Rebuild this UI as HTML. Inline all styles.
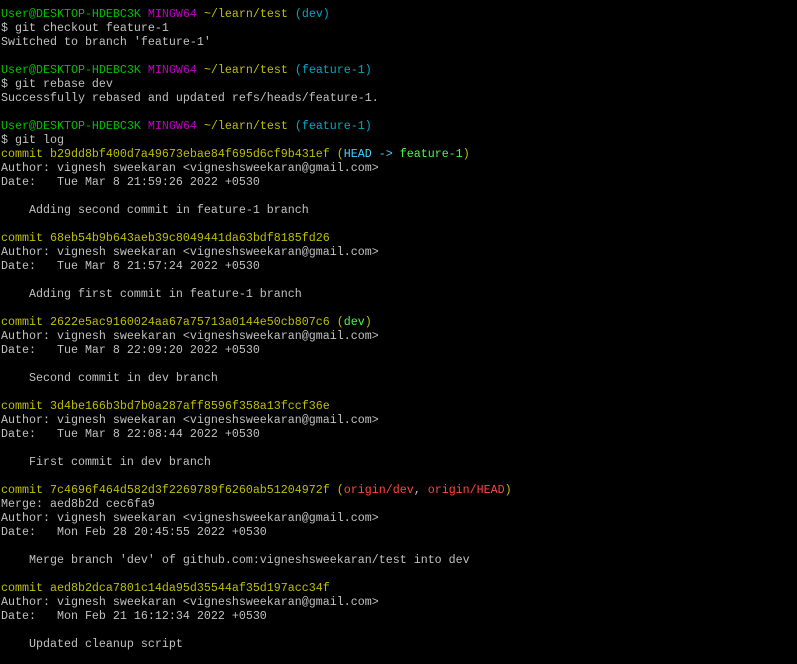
<!DOCTYPE html>
<html><head><style>
html,body{margin:0;background:#000;width:797px;height:664px;overflow:hidden}
pre{margin:0;position:absolute;left:1px;top:7px;font-family:"Liberation Mono",monospace;font-size:11.67px;line-height:14px;color:#c0c0c0;white-space:pre}
.g{color:#00bf00}.m{color:#bf00bf}.y{color:#bfbf00}.c{color:#00a8c8}.h{color:#40d0ff}.bg{color:#40ff40}.r{color:#ff4545}.w{color:#c0c0c0}
</style></head><body><pre><span class="g">User@DESKTOP-HDEBC3K</span> <span class="m">MINGW64</span> <span class="y">~/learn/test</span> <span class="c">(dev)</span>
$ git checkout feature-1
Switched to branch 'feature-1'

<span class="g">User@DESKTOP-HDEBC3K</span> <span class="m">MINGW64</span> <span class="y">~/learn/test</span> <span class="c">(feature-1)</span>
$ git rebase dev
Successfully rebased and updated refs/heads/feature-1.

<span class="g">User@DESKTOP-HDEBC3K</span> <span class="m">MINGW64</span> <span class="y">~/learn/test</span> <span class="c">(feature-1)</span>
$ git log
<span class="y">commit b29dd8bf400d7a49673ebae84f695d6cf9b431ef (<span class="h">HEAD -&gt; </span><span class="bg">feature-1</span>)</span>
Author: vignesh sweekaran &lt;vigneshsweekaran@gmail.com&gt;
Date:   Tue Mar 8 21:59:26 2022 +0530

    Adding second commit in feature-1 branch

<span class="y">commit 68eb54b9b643aeb39c8049441da63bdf8185fd26</span>
Author: vignesh sweekaran &lt;vigneshsweekaran@gmail.com&gt;
Date:   Tue Mar 8 21:57:24 2022 +0530

    Adding first commit in feature-1 branch

<span class="y">commit 2622e5ac9160024aa67a75713a0144e50cb807c6 (<span class="bg">dev</span>)</span>
Author: vignesh sweekaran &lt;vigneshsweekaran@gmail.com&gt;
Date:   Tue Mar 8 22:09:20 2022 +0530

    Second commit in dev branch

<span class="y">commit 3d4be166b3bd7b0a287aff8596f358a13fccf36e</span>
Author: vignesh sweekaran &lt;vigneshsweekaran@gmail.com&gt;
Date:   Tue Mar 8 22:08:44 2022 +0530

    First commit in dev branch

<span class="y">commit 7c4696f464d582d3f2269789f6260ab51204972f (<span class="r">origin/dev</span><span class="w">, </span><span class="r">origin/HEAD</span>)</span>
Merge: aed8b2d cec6fa9
Author: vignesh sweekaran &lt;vigneshsweekaran@gmail.com&gt;
Date:   Mon Feb 28 20:45:55 2022 +0530

    Merge branch 'dev' of github.com:vigneshsweekaran/test into dev

<span class="y">commit aed8b2dca7801c14da95d35544af35d197acc34f</span>
Author: vignesh sweekaran &lt;vigneshsweekaran@gmail.com&gt;
Date:   Mon Feb 21 16:12:34 2022 +0530

    Updated cleanup script
</pre></body></html>
